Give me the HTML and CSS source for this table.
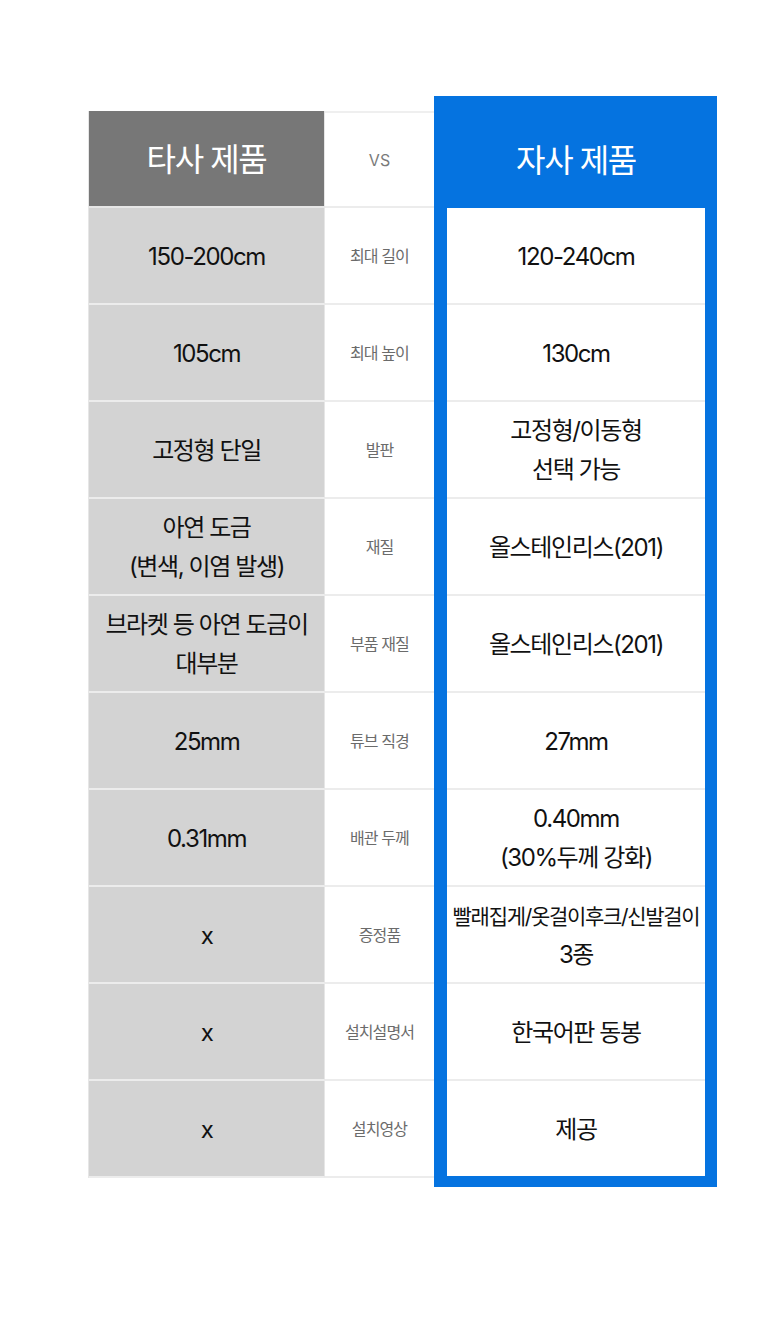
FILE: index.html
```html
<!DOCTYPE html>
<html lang="ko">
<head>
<meta charset="utf-8">
<link rel="stylesheet" href="styles.css">
</head>
<body>
<div class="compare">
  <div class="col col-other">
    <div class="cell head"><span>타사 제품</span></div>
    <div class="cell"><span>150-200cm</span></div>
    <div class="cell"><span>105cm</span></div>
    <div class="cell"><span>고정형 단일</span></div>
    <div class="cell"><span>아연 도금<br>(변색, 이염 발생)</span></div>
    <div class="cell"><span>브라켓 등 아연 도금이<br>대부분</span></div>
    <div class="cell"><span>25mm</span></div>
    <div class="cell"><span>0.31mm</span></div>
    <div class="cell"><span>x</span></div>
    <div class="cell"><span>x</span></div>
    <div class="cell"><span>x</span></div>
  </div>
  <div class="col col-label">
    <div class="cell head"><span>VS</span></div>
    <div class="cell"><span>최대 길이</span></div>
    <div class="cell"><span>최대 높이</span></div>
    <div class="cell"><span>발판</span></div>
    <div class="cell"><span>재질</span></div>
    <div class="cell"><span>부품 재질</span></div>
    <div class="cell"><span>튜브 직경</span></div>
    <div class="cell"><span>배관 두께</span></div>
    <div class="cell"><span>증정품</span></div>
    <div class="cell"><span>설치설명서</span></div>
    <div class="cell"><span>설치영상</span></div>
  </div>
  <div class="col col-ours">
    <div class="cell head"><span>자사 제품</span></div>
    <div class="cell"><span>120-240cm</span></div>
    <div class="cell"><span>130cm</span></div>
    <div class="cell"><span>고정형/이동형<br>선택 가능</span></div>
    <div class="cell"><span>올스테인리스(201)</span></div>
    <div class="cell"><span>올스테인리스(201)</span></div>
    <div class="cell"><span>27mm</span></div>
    <div class="cell"><span>0.40mm<br>(30%두께 강화)</span></div>
    <div class="cell"><span><span class="small">빨래집게/옷걸이후크/신발걸이</span><br>3종</span></div>
    <div class="cell"><span>한국어판 동봉</span></div>
    <div class="cell"><span>제공</span></div>
  </div>
</div>
</body>
</html>
```
FILE: styles.css
```css
html, body {
  margin: 0;
  padding: 0;
  background: #ffffff;
}

body {
  font-family: Inter, "Noto Sans CJK KR", "Noto Sans", sans-serif;
  color: #111111;
}

.compare {
  display: flex;
  align-items: flex-start;
  margin: 111px 0 0 88px;
}

.col {
  display: flex;
  flex-direction: column;
}

.cell {
  box-sizing: border-box;
  height: 97px;
  padding-top: 3px;
  display: flex;
  align-items: center;
  justify-content: center;
  text-align: center;
  border-bottom: 2px solid #ececec;
  line-height: 1.62;
}

.cell > span {
  display: block;
  white-space: nowrap;
}

.col-other {
  width: 237px;
  border-left: 1px solid #e6e6e6;
  box-sizing: border-box;
}

.col-other .cell {
  background: #d3d3d3;
  font-size: 24px;
  letter-spacing: -1.4px;
  border-right: 1px solid #e6e6e6;
}

.col-other .cell.head {
  background: #777777;
  color: #ffffff;
  font-size: 32px;
  letter-spacing: -1.4px;
  border-bottom-color: #e6e6e6;
}

.col-label {
  width: 109px;
}

.col-label .cell {
  font-size: 16px;
  color: #6b6b6b;
  letter-spacing: -0.9px;
}

.col-label .cell.head {
  border-top: 2px solid #efefef;
  color: #7a7a7a;
  font-size: 16px;
  letter-spacing: 0;
}

.col-ours {
  width: 283px;
  margin-top: -15px;
  background: #0573e0;
  padding: 0 12px 11px 13px;
  box-sizing: border-box;
}

.col-ours .cell {
  background: #ffffff;
  font-size: 24px;
  letter-spacing: -1.4px;
}

.col-ours .cell:last-child {
  border-bottom: none;
  height: 95px;
}

.col-ours .cell.head {
  background: #0573e0;
  color: #ffffff;
  height: 112px;
  padding-top: 18px;
  font-size: 32px;
  letter-spacing: -1.4px;
  border-bottom: none;
}

.col-ours .small {
  font-size: 21px;
  letter-spacing: -1.3px;
}
```
